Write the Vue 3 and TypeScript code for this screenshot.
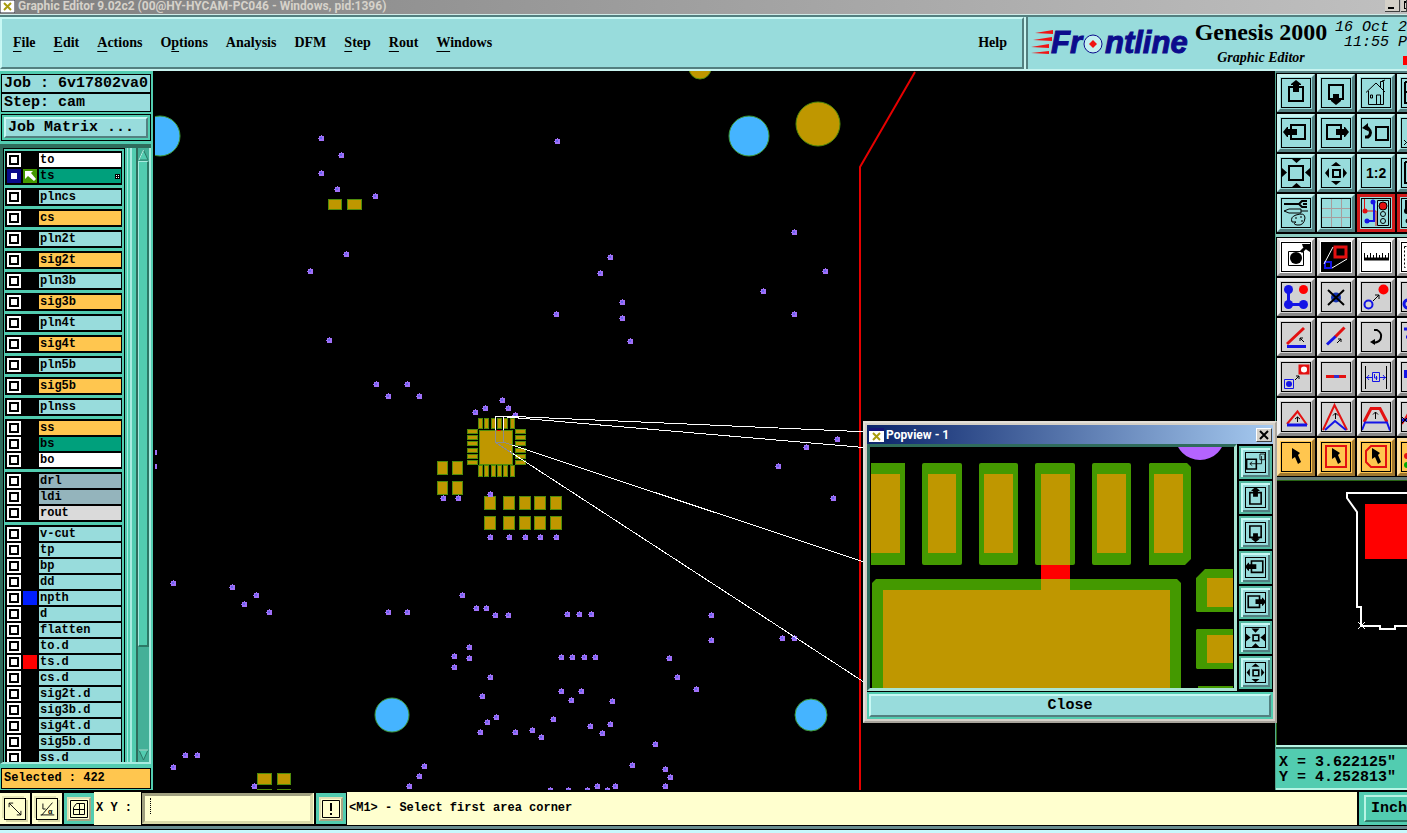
<script setup lang="ts">
import { ref } from 'vue'

interface MenuEntry { pre: string; key: string; post: string }
interface Layer { name: string; tone: string; mark?: string; active?: boolean }
interface Tool { icon: string; label: string; tone: string }

const menus: MenuEntry[] = [
  { pre: '', key: 'F', post: 'ile' },
  { pre: '', key: 'E', post: 'dit' },
  { pre: '', key: 'A', post: 'ctions' },
  { pre: 'O', key: 'p', post: 'tions' },
  { pre: 'Analysis', key: '', post: '' },
  { pre: 'DFM', key: '', post: '' },
  { pre: '', key: 'S', post: 'tep' },
  { pre: '', key: 'R', post: 'out' },
  { pre: '', key: 'W', post: 'indows' },
]

const L = (name: string, tone = 'cyan', mark?: string): Layer => ({ name, tone, mark })
const groups: Layer[][] = [
  [L('to', 'white'), { name: 'ts', tone: 'green', mark: 'work', active: true }],
  [L('plncs')], [L('cs', 'orange')],
  [L('pln2t')], [L('sig2t', 'orange')],
  [L('pln3b')], [L('sig3b', 'orange')],
  [L('pln4t')], [L('sig4t', 'orange')],
  [L('pln5b')], [L('sig5b', 'orange')],
  [L('plnss')],
  [L('ss', 'orange'), L('bs', 'green'), L('bo', 'white')],
  [L('drl', 'slate'), L('ldi', 'slate'), L('rout', 'gray')],
  [L('v-cut'), L('tp'), L('bp'), L('dd'), L('npth', 'cyan', 'blue'), L('d'), L('flatten'), L('to.d'),
    L('ts.d', 'cyan', 'red'), L('cs.d'), L('sig2t.d'), L('sig3b.d'), L('sig4t.d'), L('sig5b.d'), L('ss.d')],
]

const line = (d: string, c = '#000', w = 2): string => `<path d="${d}" fill="none" stroke="${c}" stroke-width="${w}"/>`
const fill = (d: string, c = '#000'): string => `<path d="${d}" fill="${c}"/>`
const dot = (x: number, y: number, r: number, c: string): string => `<circle cx="${x}" cy="${y}" r="${r}" fill="${c}"/>`
const R = '#e31010'
const B = '#1414e6'
const pointer = fill('M11 6l8 5-2 2 3 7-3 2-3-7-3 2z')

const icons: Record<string, string> = {
  up: line('M8 9h14v14H8z') + fill('M15 2l5 4v1h-2v7h-6V7h-2V6z'),
  down: line('M8 7h14v14H8z') + fill('M15 27l5-4v-1h-2v-6h-6v6h-2v1z'),
  home: line('M5 14.500L15 5l9 9M7.500 13v13.500h15V13M15.500 26v-9h4v9M9.500 17h2v3h-2zM19.500 9V3.500h3V12M21 3l3-1', '#000', 1),
  left: line('M10 7h14v14H10z') + fill('M2 14l4-5h1v2h9v6H7v2H6z'),
  right: line('M6 7h14v14H6z') + fill('M28 14l-4-5h-1v2h-8v6h8v2h1z'),
  undo: line('M15 9h12v13H15z') + line('M4 10h3q5 5 0 9H4', '#000', 3) + fill('M1 10l6-5v8z'),
  shrink: line('M8 8h14v14H8z') + fill('M11 1h9l-4.500 4zM11 29h9l-4.500-4zM1 10v9l5-4.500zM29 10v9l-5-4.500z'),
  expand: line('M12 12h7v7h-7z') + fill('M10 8h10l-5-4zM10 23h10l-5 4zM8 10v10l-4-5zM22 10v10l4-5z'),
  popshrink: line('M12 12h7v7h-7z') + fill('M10 4h10l-5 5zM10 27h10l-5-5zM3 10v10l6-5zM27 10v10l-6-5z'),
  one: '<text x="5" y="20" font-family="Liberation Sans, sans-serif" font-weight="bold" font-size="14">1:2</text>',
  tools: line('M3 6h15', '#000', 2) + line('M26 3h-5l-3 3 3 3h5M26 6h-4', '#000', 2) + line('M3 13l5-2h12v4H8zM20 13h7', '#000', 1)
    + line('M11 24q-2-5 4-7 9-3 9 3-1 8-8 7-5-1-1-3zM14 20h2M19 19h2M20 23h2', '#000', 1),
  grid: line('M10.500 1v28M20.500 1v28M1 10.500h28M1 19.500h28', '#a89c9c', 1),
  signal: line('M3.500 1v11M4 13h11v15', R, 1) + line('M13 5v18H6', B, 2) + dot(4, 13, 2.5, R) + dot(12, 4, 2.5, B) + dot(6, 23, 2.5, B)
    + '<path d="M16.500 2.500h11v25h-11z" fill="#98dcdc" stroke="#000"/>' + dot(22, 8, 4, R)
    + '<g fill="none" stroke="#000"><circle cx="22" cy="8" r="4"/><circle cx="22" cy="16" r="2.500"/><circle cx="22" cy="23" r="2.500"/></g>',
  padmove: line('M7.500 9.500h15v14h-15z', '#000', 1) + dot(15, 16, 6, '#000') + line('M20 10l5-5', '#000', 3) + fill('M21 2h8v8l-3-2-4-3z'),
  zoombox: fill('M0 0h30v30H0z') + line('M14 5h11v10H14z', R, 3) + line('M4 20h6v6H4z', B, 2) + line('M12 5L3 22M26 17L11 26', '#fff', 1),
  ruler: line('M3 17h25', '#000', 3) + line('M3.500 11v6M6.500 13v4M9.500 11v6M12.500 13v4M15.500 11v6M18.500 13v4M21.500 11v6M24.500 13v4M27.500 11v6', '#000', 1),
  net: line('M7.500 7v15.500h15', B, 3) + dot(7.5, 7.5, 4.5, B) + dot(7.5, 22.5, 4.5, B) + dot(22.5, 22.5, 4.5, B) + dot(22.5, 7.5, 4.5, '#f00'),
  cross: dot(15, 15.5, 5, '#1432b4') + line('M7 8l16 15M23 8L7 23', '#000', 2),
  copy: dot(22.5, 7.5, 5, '#f00') + '<circle cx="7.500" cy="22.500" r="4" fill="none" stroke="#1414e6" stroke-width="2"/>' + line('M12 19l6-6M14 13h4v4', '#000', 1),
  angle: line('M6 22L23 6', R, 3) + line('M6 24.500h19', B, 3) + line('M23 20l-4-4M19 19v-3h3', '#000', 1),
  segment: line('M14 15l9.500-9.500', R, 3) + line('M6 22.500l8.500-8', B, 3) + line('M16 21l4-4M17 17h3v3', '#000', 1),
  turn: line('M13 8h3q5 3 4 7 0 5-8 6', '#000', 2) + fill('M9 20l5-3v6z'),
  swap: line('M3.500 17.500h9v9h-9z', B, 1) + dot(8, 22, 3, B) + line('M19 4h8v7h-8z', R, 3) + dot(23, 7.5, 3, '#fff') + line('M14 18l4-4M15 14h3v3', '#000', 1),
  join: line('M5 14.500h20', R, 3) + line('M13 14.500h5', '#3030d0', 3),
  width: line('M4.500 4v23M25.500 4v23', '#000', 1) + line('M11.500 10.500h7v9h-7zM5 15.500h6M19 15.500h6M8 13l-2 2.500L8 18M22 13l2 2.500-2 2.500', B, 1)
    + line('M13.500 12v4h3M15.500 14v4', B, 1),
  slope: line('M6 22L16.500 9.500 26 23', R, 2) + line('M6 23h20', B, 3) + line('M16.500 20v-5M14 17l2.500-2 2.500 2', '#000', 1),
  peak: line('M2 28L13.500 3 26 28', R, 2) + line('M4 28l10-9 11 9', B, 2) + line('M14.500 17v-6M12 13.500l2.500-2.500 2.500 2.500', '#000', 1),
  arch: line('M3 20l7-13.500h9L26 20', R, 3) + line('M1 28l3-7.500h22l3 8', B, 2) + line('M14.500 17v-7M12 12.500l2.500-2.500 2.500 2.500', '#000', 1),
  point: pointer,
  pointrect: line('M5 4h20v21H5z', R, 2) + pointer,
  pointpoly: line('M10 4h15v21H10l-5-5V9z', R, 2) + pointer,
  pane: line('M4 4v21h20M4 4h20M4 14h20'),
  corner: line('M3 22l5 5M3 27l5-5', '#000', 1),
  frame: line('M4 4v21h20M4 4h20'),
  lamps: line('M5 2v12', '#000', 2) + dot(6, 13, 3, '#000') + dot(7, 23, 2.5, '#000'),
  dashed: '<path d="M3.500 4.500h20v21h-20z" fill="none" stroke="#000" stroke-dasharray="2 2"/>',
  ball: '<circle cx="7" cy="22" r="4" fill="none" stroke="#1414e6" stroke-width="3"/>',
  bars: line('M3 7h7M5 15h7', B, 3),
  block: fill('M3 8h8v8H3z', B),
  ramp: line('M1 22l7-12', R, 2) + line('M1 18h8', B, 3) + line('M1 15l6 6M1 21l6-6', '#000', 1),
  beads: dot(6, 14, 3, R) + dot(6, 23, 3, '#0a0'),
  popnew: line('M4 11h12v12H4z') + line('M20.500 4.500h6v7h-6zM22.500 7v9.500H8M11 14l-3 2.500 3 2.500', '#000', 1),
  diag: line('M4.500 4.500l13 13M4.500 9V4.500H9M13 17.500h4.500V13', '#000', 1),
  polar: line('M4 17.500h15M5 18L17 4M6.500 5v6h3', '#000', 1) + '<text x="12" y="16" font-family="Liberation Sans, sans-serif" font-size="8">α</text>',
  mesh: line('M1.500 1.500h17v17h-17zM4.500 8.500l3-4h8v11h-11zM10.500 4.500v11M4.500 10.500h11', '#000', 1),
  bang: line('M1.500 1.500h17v17h-17z', '#000', 1) + fill('M9 4h2v8H9zM9 14h2v2H9z'),
}

const T = (icon: string, label: string, tone = 'cyan'): Tool => ({ icon, label, tone })
const viewTools: Tool[] = [
  T('up', 'Pan up'), T('down', 'Pan down'), T('home', 'Home'), T('pane', 'Split view'),
  T('left', 'Pan left'), T('right', 'Pan right'), T('undo', 'Previous view'), T('corner', 'Area'),
  T('shrink', 'Zoom in'), T('expand', 'Zoom out'), T('one', 'Scale'), T('frame', 'Frame'),
  T('tools', 'Setup'), T('grid', 'Grid'), T('signal', 'Snap', 'red'), T('lamps', 'Snap mode', 'red'),
]
const editTools: Tool[] = [
  T('padmove', 'Move', 'white'), T('zoombox', 'Popview', 'white'), T('ruler', 'Measure', 'white'), T('dashed', 'Area', 'white'),
  T('net', 'Net', 'gray'), T('cross', 'Delete', 'gray'), T('copy', 'Copy', 'gray'), T('ball', 'Round', 'gray'),
  T('angle', 'Angle', 'gray'), T('segment', 'Segment', 'gray'), T('turn', 'Rotate', 'gray'), T('bars', 'Align', 'gray'),
  T('swap', 'Swap', 'gray'), T('join', 'Join', 'gray'), T('width', 'Width', 'gray'), T('block', 'Block', 'gray'),
  T('slope', 'Slope', 'gray'), T('peak', 'Peak', 'gray'), T('arch', 'Arch', 'gray'), T('ramp', 'Ramp', 'gray'),
  T('point', 'Select', 'orange'), T('pointrect', 'Select in rectangle', 'orange'), T('pointpoly', 'Select in polygon', 'orange'), T('beads', 'Select net', 'orange'),
]
const popTools: Tool[] = [
  T('popnew', 'New popview'), T('up', 'Pan up'), T('down', 'Pan down'), T('left', 'Pan left'),
  T('right', 'Pan right'), T('popshrink', 'Zoom in'), T('expand', 'Zoom out'),
]

const vias: number[][] = [
  [321, 138], [341, 155], [321, 173], [337, 189], [375, 196], [557, 141], [346, 254], [310, 271], [329, 340],
  [376, 384], [407, 384], [388, 396], [419, 396], [556, 314], [610, 257], [600, 273], [622, 302], [622, 318], [630, 341],
  [794, 232], [825, 271], [763, 291], [794, 314], [837, 439], [806, 447], [778, 466], [833, 498],
  [475, 412], [485, 408], [502, 400], [508, 408], [515, 415], [443, 498], [458, 498], [490, 494],
  [490, 537], [509, 537], [525, 537], [540, 537], [556, 537], [173, 583], [232, 587], [256, 595], [244, 604], [269, 612],
  [388, 612], [407, 612], [462, 595], [476, 608], [486, 608], [495, 615], [508, 615], [567, 614], [579, 614], [591, 614],
  [711, 615], [711, 640], [782, 638], [794, 638], [469, 647], [454, 656], [469, 658], [454, 667], [490, 677], [482, 696],
  [561, 657], [572, 657], [584, 657], [595, 657], [669, 658], [677, 677], [696, 689], [561, 691], [581, 691], [571, 700],
  [612, 701], [553, 719], [590, 726], [610, 724], [602, 733], [496, 717], [487, 722], [480, 732], [515, 732], [532, 730],
  [541, 737], [655, 744], [632, 765], [665, 769], [670, 777], [665, 786], [424, 766], [419, 776], [409, 786],
  [550, 790], [568, 790], [587, 790], [597, 786], [607, 790], [615, 786], [185, 755], [197, 755], [173, 767], [254, 786],
  [154, 452], [154, 466],
]
const range = [0, 1, 2, 3, 4, 5]
const pads: number[][] = [
  [328, 199, 13, 10], [347, 199, 14, 10], [257, 773, 14, 11], [277, 773, 13, 11], [257, 789, 14, 4], [277, 789, 13, 4],
  [479, 430, 33, 34],
  ...range.map((i) => [478 + Math.round(i * 6.3), 418, 4, 10]),
  ...range.map((i) => [478 + Math.round(i * 6.3), 465, 4, 11]),
  ...range.map((i) => [467, 429 + Math.round(i * 6.2), 10, 4]),
  ...range.map((i) => [515, 429 + Math.round(i * 6.2), 10, 4]),
  ...[437, 452].flatMap((x) => [[x, 461, 10, 13], [x, 481, 10, 13]]),
  ...[484, 503, 519, 534, 550].flatMap((x) => [[x, 496, 11, 13], [x, 516, 11, 13]]),
]
const fingers: number[][] = [[52, 40, 58, 28], [109, 39, 114, 29], [222, 39, 227, 29]]

const shown = ref(true)
const coords = ref('')
</script>

<template>
  <div class="app">
    <header class="titlebar">
      <svg class="xlogo" viewBox="0 0 15 13" aria-hidden="true"><path d="M0 0h15v13H0z" fill="#fff" stroke="#223" /><path d="M4 3l7 7M11 3l-7 7" stroke="#aa9c10" stroke-width="2" /></svg>
      <span class="title">Graphic Editor 9.02c2 (00@HY-HYCAM-PC046 - Windows, pid:1396)</span>
      <button class="winbtn" aria-label="Minimize"><i class="min"></i></button>
      <button class="winbtn half" aria-label="Maximize"><i class="max"></i></button>
    </header>

    <div class="head">
      <nav class="menu">
        <button v-for="m in menus" :key="m.pre + m.key">{{ m.pre }}<u>{{ m.key }}</u>{{ m.post }}</button>
        <button class="help">Help</button>
      </nav>
      <div class="brand">
        <svg class="logo" viewBox="0 0 160 44" role="img" aria-label="Frontline">
          <path d="M4 12l18-3v4zM2 19l19-3v4zM0 26l18-3v4zM0 32l18-2v3z" fill="#f01414" />
          <g fill="#0c0c8c" stroke="#0c0c8c" stroke-width="1" font-family="Liberation Sans, sans-serif" font-weight="bold" font-style="italic" font-size="31">
            <text x="20" y="32">Fr</text><text x="74" y="32">ntline</text>
          </g>
          <circle cx="62" cy="23" r="9" fill="#c4f0f0" stroke="#0c0c8c" />
          <path d="M62 19l4 4-4 4-4-4z" fill="#f01414" />
        </svg>
        <div class="product"><strong>Genesis 2000</strong><em>Graphic Editor</em></div>
        <div class="clock"><span>16 Oct 2</span><span>&nbsp;11:55 P</span><i></i></div>
      </div>
    </div>

    <main class="main">
      <aside class="side">
        <div class="info">Job : 6v17802va0</div>
        <div class="info">Step: cam</div>
        <div class="matrix"><button>Job Matrix ...</button></div>
        <div class="listframe">
          <div class="list">
            <div v-for="(g, gi) in groups" :key="gi" class="group">
              <label v-for="l in g" :key="l.name" class="layer">
                <input type="checkbox" :class="{ active: l.active }" />
                <span class="mark" :class="l.mark">
                  <svg v-if="l.mark === 'work'" viewBox="0 0 14 14"><path d="M2 2h8L8 4l5 6-2 2-6-5-3 3z" fill="#fff" /></svg>
                </span>
                <span class="name" :class="l.tone">{{ l.name }}
                  <svg v-if="l.active" class="ctx" viewBox="0 0 5 5"><path d="M0 0h5v5H0z" /><path d="M1 1h1v1H1zM3 1h1v1H3zM1 3h1v1H1zM3 3h1v1H3z" fill="#fff" /></svg>
                </span>
              </label>
            </div>
          </div>
          <div class="stripe"></div>
          <div class="scroll">
            <button aria-label="Scroll up"><svg viewBox="0 0 11 13"><path d="M1 12L5.500 2 10 12z" fill="#52ccb0" stroke="#2c7866" /><path d="M1 12L5.500 2" stroke="#b8f4e4" /></svg></button>
            <div class="thumb"></div>
            <div class="trough"></div>
            <button aria-label="Scroll down"><svg viewBox="0 0 11 13"><path d="M1 1l4.500 10L10 1z" fill="#52ccb0" stroke="#2c7866" /><path d="M1 1h9" stroke="#b8f4e4" /></svg></button>
          </div>
        </div>
        <div class="selected">Selected : 422</div>
      </aside>

      <section class="board">
        <svg class="boardsvg" role="img" aria-label="Board layout">
          <g transform="translate(-155 -71)">
            <g fill="#45b4ff" stroke="#3c9632">
              <circle cx="160" cy="136" r="20" /><circle cx="749" cy="136" r="20" />
              <circle cx="392" cy="715" r="17" /><circle cx="811" cy="715" r="16" />
            </g>
            <g fill="#bf9700" stroke="#508c0a">
              <circle cx="818" cy="124" r="22" /><circle cx="700" cy="68" r="11" />
            </g>
            <g fill="#508c0a">
              <rect v-for="(p, i) in pads" :key="i" :x="p[0]" :y="p[1]" :width="p[2] + 1" :height="p[3] + 1" />
            </g>
            <g fill="#bf9700">
              <rect v-for="(p, i) in pads" :key="i" :x="p[0] + 1" :y="p[1] + 1" :width="p[2] - 1" :height="p[3] - 1" />
            </g>
            <g v-for="(v, i) in vias" :key="'v' + i">
              <path :d="`M${v[0] - 2} ${v[1] - 2}h2v-1h1v1h2v5h-5v-2h-1v-1h1z`" fill="#a070f8" />
              <rect :x="v[0] - 1" :y="v[1] - 1" width="2" height="2" fill="#6464f0" />
            </g>
            <path d="M915 72L860 167V790" fill="none" stroke="#e60000" stroke-width="2" />
            <g fill="none" shape-rendering="crispEdges">
              <path d="M495 430V416h8v14M503 416L870 432M495 416L870 448M503 442L870 564M495 442L870 686" stroke="#fff" />
              <path d="M495 430v12h8V430M503 442l9 3M495 442l18 12" stroke="#8c8c8c" />
              <path d="M497 430h4" stroke="#e60000" />
            </g>
          </g>
        </svg>
      </section>

      <aside class="right">
        <div class="tools">
          <button v-for="t in viewTools" :key="t.icon" class="tool" :class="t.tone" :aria-label="t.label"><svg viewBox="0 0 30 30" v-html="icons[t.icon]"></svg></button>
        </div>
        <div class="tools second">
          <button v-for="t in editTools" :key="t.icon" class="tool" :class="t.tone" :aria-label="t.label"><svg viewBox="0 0 30 30" v-html="icons[t.icon]"></svg></button>
        </div>
        <svg class="overview" role="img" aria-label="Overview">
          <path d="M131 12H70v5l10 14v95h4v19h19v3h15v-3h13" fill="none" stroke="#fff" stroke-width="2" />
          <path d="M81 141l7 7M88 141l-7 7" stroke="#fff" />
          <path d="M88 23h50v55H88z" fill="#f00" />
        </svg>
        <div class="coords"><div>X = 3.622125"</div><div>Y = 4.252813"</div></div>
      </aside>
    </main>

    <footer class="status">
      <button class="foot" aria-label="Line mode"><svg viewBox="0 0 22 22" v-html="icons.diag"></svg></button>
      <button class="foot" aria-label="Polar mode"><svg viewBox="0 0 22 22" v-html="icons.polar"></svg></button>
      <button class="foot teal" aria-label="Grid mode"><svg viewBox="0 0 20 20" v-html="icons.mesh"></svg></button>
      <label class="xy" for="xy">X Y :</label>
      <div class="field"><input id="xy" v-model="coords" type="text" /></div>
      <button class="foot teal" aria-label="Apply"><svg viewBox="0 0 20 20" v-html="icons.bang"></svg></button>
      <div class="message">&lt;M1&gt; - Select first area corner</div>
      <div class="unit"><button>Inch</button></div>
    </footer>
    <div class="under"></div>

    <section v-if="shown" class="popup" role="dialog" aria-label="Popview - 1">
      <div class="poptitle">
        <svg class="popx" viewBox="0 0 15 14" aria-hidden="true"><path d="M0 0h15v14H0z" fill="#fff" /><path d="M0 0h15v3H0z" fill="#14147a" /><path d="M4 5l7 7M11 5l-7 7" stroke="#aa9c10" stroke-width="2" /></svg>
        <span>Popview - 1</span>
        <button class="popclose" aria-label="Close window" @click="shown = false"><svg viewBox="0 0 12 10"><path d="M2 1l8 8M10 1L2 9" stroke="#000" stroke-width="2" /></svg></button>
      </div>
      <div class="popbody">
        <div class="popview">
          <svg class="popsvg" role="img" aria-label="Magnified pads">
            <g fill="#449900">
              <path d="M1 16h34v102H1z" />
              <rect v-for="f in fingers" :key="f[0]" :x="f[0]" y="16" :width="f[1]" height="102" rx="2" />
              <rect x="165" y="16" width="40" height="102" rx="2" />
              <path d="M279 17l1-1h37l4 4v92l-6 6h-36z" />
              <path d="M2 250V136l4-4h301l4 4v114zM326 131l9-9h28v43h-36l-1-1zM327 182h36v40h-36l-1-1v-38zM328 239h35v2h-35z" />
            </g>
            <g fill="#bf9700">
              <path d="M1 27h29v79H1zM171 27h29v91h-29zM284 27h29v79h-29zM13 143h158v-11h29v11h100v107H13zM337 131h26v29h-26zM337 188h26v28h-26z" />
              <rect v-for="f in fingers" :key="f[2]" :x="f[2]" y="27" :width="f[3]" height="79" />
            </g>
            <path d="M171 118h29v14h-29z" fill="#f00" />
            <circle cx="330" cy="-12" r="25" fill="#b464ff" />
          </svg>
        </div>
        <div class="poptools">
          <button v-for="t in popTools" :key="t.icon" class="ptool" :aria-label="t.label"><svg viewBox="2 2 26 26" v-html="icons[t.icon]"></svg></button>
        </div>
      </div>
      <div class="popfoot"><button @click="shown = false">Close</button></div>
    </section>
  </div>
</template>

<style>
html, body { margin: 0; background: #000; overflow: hidden; }
</style>

<style scoped>
* { box-sizing: border-box; }
.app { position: relative; display: flex; flex-direction: column; height: 100vh; overflow: hidden; background: #000; color: #000; font-family: "Liberation Mono", "Courier New", monospace; }
button { margin: 0; padding: 0; border: 0; background: none; color: inherit; font: inherit; cursor: pointer; }
svg { display: block; }

.titlebar { flex: none; display: flex; align-items: flex-start; height: 14px; background: linear-gradient(90deg, #808080, #c0c0c0); }
.xlogo { width: 15px; height: 13px; }
.title { flex: 1; margin-left: 3px; font: bold 12px/12px Roboto, sans-serif; color: #d6d2ca; white-space: nowrap; }
.winbtn { display: flex; align-items: flex-end; width: 15px; height: 12px; padding: 0 0 2px 3px; background: #d4d0c8; border: 1px solid #404040; border-width: 0 1px 1px 0; }
.winbtn.half { width: 6px; margin-left: 1px; overflow: hidden; }
.min { width: 6px; height: 2px; background: #000; }
.max { flex: none; width: 9px; height: 8px; border: 1px solid #000; border-top-width: 2px; }

.head { flex: none; display: flex; height: 57px; padding-top: 2px; background: #538080; border-top: 1px solid #d0ece8; border-bottom: 2px solid #c8f4f0; }
.menu { flex: 1; display: flex; align-items: center; gap: 18px; padding: 0 15px 0 11px; background: #98dcdc; border: 2px solid #c8f8f4; border-right-color: #538080; border-bottom-color: #538080; font: bold 14px/20px "Liberation Serif", serif; white-space: nowrap; }
.menu u { text-underline-offset: 4px; }
.help { margin-left: auto; }
.brand { flex: none; display: flex; width: 383px; padding-left: 3px; background: #98dcdc; border-left: 2px solid #c8f4f0; box-shadow: inset 2px 0 #538080; overflow: hidden; white-space: nowrap; }
.logo { flex: none; width: 160px; height: 44px; margin: 4px 0 0 2px; overflow: visible; }
.product { flex: none; display: flex; flex-direction: column; align-items: center; width: 136px; margin-left: 2px; font-family: "Liberation Serif", serif; }
.product strong { font-size: 24px; line-height: 30px; }
.product em { font-size: 14px; line-height: 22px; font-weight: bold; }
.clock { flex: none; display: flex; flex-direction: column; margin-left: 6px; padding-top: 3px; font-size: 15px; line-height: 15px; font-style: italic; }
.clock i { width: 12px; height: 9px; margin: 6px 0 0 68px; background: #f00; }

.main { flex: 1; display: flex; min-height: 0; }
.side { flex: none; display: flex; flex-direction: column; width: 153px; padding: 3px 2px 1px 1px; background: #52ccb0; font-weight: bold; }
.info { flex: none; height: 19px; border: 1px solid #000; background: #98dcdc; padding-left: 2px; font-size: 15px; line-height: 17px; white-space: nowrap; }
.matrix { flex: none; height: 27px; margin-top: 2px; padding: 2px; border: 1px solid #000; }
.matrix button { display: block; width: 100%; height: 21px; padding-left: 2px; background: #98dcdc; border: 2px solid #c8f8f4; border-right-color: #538080; border-bottom-color: #538080; font-size: 15px; line-height: 17px; text-align: left; }
.listframe { flex: 1; display: flex; min-height: 0; margin: 3px 0 0 -1px; border: 3px solid #2f6c5c; border-width: 4px 0 2px 3px; border-bottom-color: #a8ece0; }
.list { flex: none; width: 122px; padding: 2px 2px 0 1px; border: 1px solid #000; border-bottom: 0; overflow: hidden; }
.group { margin-bottom: 3px; padding: 1px; background: #000; }
.layer { display: flex; height: 16px; padding: 1px 0; }
.layer input { appearance: none; flex: none; width: 14px; height: 14px; margin: 0 2px 0 1px; background: #fff; box-shadow: inset 0 0 0 2px #fff, inset 0 0 0 4px #000; }
.layer input.active { box-shadow: inset 0 0 0 4px #0a0a8c; }
.mark { flex: none; width: 14px; height: 14px; margin-right: 2px; }
.mark.work { background: #449900; }
.mark.blue { background: #001eff; }
.mark.red { background: #f00; }
.name { flex: 1; display: flex; justify-content: space-between; align-items: center; padding: 0 1px; font-size: 12px; line-height: 14px; }
.ctx { width: 5px; height: 5px; }
.name.cyan { background: #98dcdc; }
.name.white { background: #fff; }
.name.green { background: #00a07c; }
.name.orange { background: #ffc64f; }
.name.slate { background: #94b4bc; }
.name.gray { background: #dadada; }
.stripe { flex: none; width: 7px; margin-right: 4px; border-right: 2px solid #a8ece0; background: linear-gradient(90deg, #52ccb0 2px, #a8ece0 2px, #a8ece0 3px, #52ccb0 3px); }
.scroll { flex: 1; display: flex; flex-direction: column; border-left: 2px solid #2f6c5c; border-right: 2px solid #a8ece0; }
.scroll button { flex: none; height: 13px; background: #44b098; }
.scroll svg { width: 11px; height: 13px; }
.thumb { flex: 490; background: #52ccb0; border: 2px solid #a8ece0; border-width: 1px 2px 2px 1px; border-right-color: #2c7866; border-bottom-color: #2c7866; }
.trough { flex: 103; background: #44b098; }
.selected { flex: none; height: 21px; margin-top: 4px; padding-left: 2px; background: #ffc64f; border: 1px solid #000; font-size: 12px; line-height: 18px; }

.board { flex: 1; min-width: 0; margin-left: 2px; background: #000; overflow: hidden; }
.boardsvg { width: 100%; height: 100%; }

.right { flex: none; display: flex; flex-direction: column; width: 132px; background: #000; border-left: 1px solid #52a890; overflow: hidden; }
.tools { flex: none; display: grid; grid-template-columns: repeat(4, 38px); gap: 2px; padding: 1px 0 2px 1px; border-top: 2px solid #538080; }
.second { padding-top: 1px; padding-bottom: 1px; border-top: 3px solid #8cccc0; border-bottom: 3px solid #687c78; }
.tool { width: 38px; height: 38px; padding: 1px; background: #98dcdc; border: 3px solid #c8f4f0; border-right-color: #538080; border-bottom-color: #538080; }
.tool svg { width: 30px; height: 30px; outline: 1px solid #000; outline-offset: -1px; overflow: hidden; }
.tool.red { border-color: #d01c1c; }
.tool.white { background: #fff; border-color: #f4f4f4 #909090 #909090 #d8d8d8; }
.tool.gray { background: #d2d2d2; border-color: #f0f0f0 #888 #888 #f0f0f0; }
.tool.orange { background: #ffc64f; border-color: #ffe0a0 #a07830 #a07830 #ffe0a0; }
.overview { flex: 1; width: 100%; min-height: 0; border-left: 1px solid #286414; border-top: 1px solid #286414; }
.coords { flex: none; height: 45px; padding: 8px 0 0 3px; background: #52ccb0; border-top: 2px solid #b8f4e4; border-bottom: 2px solid #b8f4e4; box-shadow: inset 0 2px #2f6c5c; font-size: 15px; line-height: 15px; font-weight: bold; white-space: nowrap; }

.status { flex: none; display: flex; height: 33px; margin-top: 2px; background: #ffffcf; font-weight: bold; font-size: 12px; }
.foot { flex: none; width: 32px; padding: 5px 4px; border: 1px solid #000; border-width: 1px 2px 1px 0; }
.foot svg { width: 22px; height: 22px; border: 1px solid #000; box-shadow: 2px 2px #d8d8a8, -2px -2px #e8e8b8; }
.foot.teal { width: 30px; padding: 4px 3px; background: #52ccb0; border-width: 1px 0; }
.foot.teal svg { width: 24px; height: 24px; background: #ffffcf; border: 2px solid #e0e0b4; border-right-color: #a8a484; border-bottom-color: #a8a484; box-shadow: none; }
.xy { width: 47px; padding-left: 2px; line-height: 33px; white-space: pre; }
.field { position: relative; flex: none; width: 175px; padding: 0 1px 0 0; border: 1px solid #000; border-right-width: 2px; }
.field::after { content: ""; position: absolute; left: 8px; top: 5px; height: 16px; border-left: 1px dotted #000; }
.field input { display: block; width: 100%; height: 31px; padding: 0 6px; background: #ffffcf; border: 3px solid #a0a080; border-right-color: #d8d8a8; border-bottom-color: #d8d8a8; outline: 0; font: inherit; }
.message { flex: 1; min-width: 0; padding-left: 2px; border-left: 1px solid #000; line-height: 33px; white-space: nowrap; }
.unit { flex: none; width: 50px; padding: 3px 0 3px 5px; background: #52ccb0; border-left: 2px solid #000; overflow: hidden; }
.unit button { width: 56px; height: 27px; padding-left: 5px; border: 2px solid #b8f4e4; border-right-color: #2c7866; border-bottom-color: #2c7866; font-size: 15px; line-height: 23px; text-align: left; }
.under { flex: none; height: 8px; border-top: 1px solid #000; background: linear-gradient(#688c90 3px, #000 3px, #000 4px, #c8f8fc 4px); }

.popup { position: absolute; left: 863px; top: 421px; width: 414px; height: 302px; padding: 2px; display: flex; flex-direction: column; background: #000; border: 2px solid #e4e0d8; border-right-color: #a8a49c; border-bottom-color: #a8a49c; box-shadow: inset 0 0 0 2px #d4d0c8; }
.poptitle { flex: none; display: flex; align-items: center; height: 19px; background: linear-gradient(90deg, #0a246a, #a6caf0); color: #fff; font: bold 12px/18px Roboto, sans-serif; }
.popx { width: 15px; height: 14px; margin: 0 2px; }
.popclose { display: flex; align-items: center; justify-content: center; width: 16px; height: 14px; margin: 0 1px 0 auto; background: #d4d0c8; border: 1px solid #fff; border-right-color: #404040; border-bottom-color: #404040; }
.popclose svg { width: 12px; height: 10px; }
.popbody { flex: 1; display: flex; min-height: 0; }
.popview { flex: 1; min-width: 0; border: 3px solid #a8e4d4; border-top-color: #2f6c5c; border-left-color: #2f6c5c; }
.popsvg { width: 100%; height: 100%; }
.poptools { flex: none; display: flex; flex-direction: column; gap: 2px; padding: 2px 1px 0 2px; }
.ptool { width: 33px; height: 33px; padding: 2px; background: #98dcdc; border: 2px solid #52b8a0; box-shadow: inset 2px 2px #c8f8f4, inset -2px -2px #538080; }
.ptool svg { width: 21px; height: 21px; margin: 2px; outline: 1px solid #000; outline-offset: -1px; overflow: hidden; }
.popfoot { flex: none; height: 27px; margin-top: 1px; padding: 2px; background: #52ccb0; }
.popfoot button { display: block; width: 100%; height: 23px; background: #98dcdc; border: 2px solid #c8f8f4; border-right-color: #538080; border-bottom-color: #538080; font-size: 15px; line-height: 18px; font-weight: bold; }
</style>
